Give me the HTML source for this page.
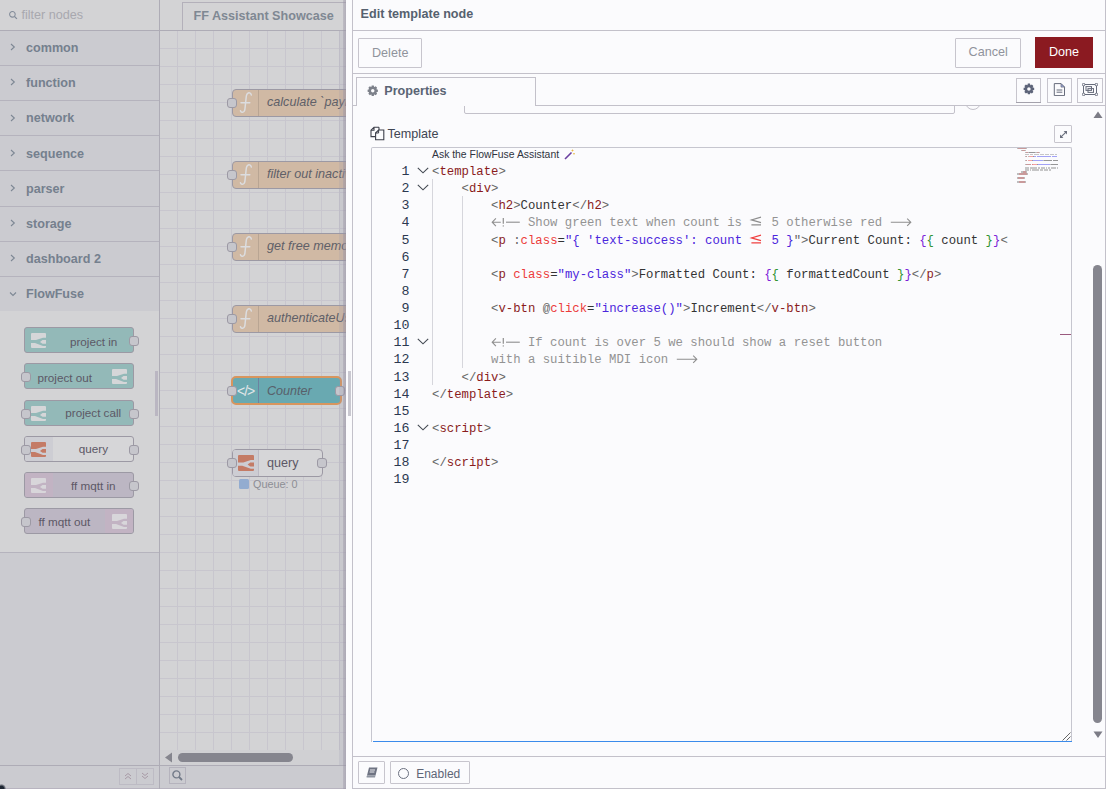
<!DOCTYPE html>
<html><head><meta charset="utf-8">
<style>
*{box-sizing:border-box;margin:0;padding:0}
html,body{width:1106px;height:789px;overflow:hidden;background:#fbfbfd;font-family:"Liberation Sans",sans-serif}
body{position:relative}
.a{position:absolute}
.t{position:absolute;white-space:pre;line-height:1}
/* palette */
#pal{left:0;top:0;width:160px;height:789px;background:#cbcbd0}
.hl{position:absolute;height:1px;background:#b5b3bd}
.vl{position:absolute;width:1px;background:#b5b3bd}
.cat{position:absolute;left:26px;font-weight:bold;font-size:12.6px;color:#75808e;white-space:pre;line-height:1}
.chev{position:absolute;left:10px;width:5px;height:8px}
.pn{position:absolute;left:24px;width:110px;height:26px;border:1px solid #9c99a4;border-radius:3px}
.port{position:absolute;width:10px;height:10px;background:#c6c6cc;border:1px solid #9c99a4;border-radius:3px}
.pl{position:absolute;font-size:11.7px;color:#5c5866;white-space:pre;line-height:1}
/* workspace */
#ws{left:160px;top:0;width:186px;height:789px;background:#d3d3d5;overflow:hidden}
.node{position:absolute;border:1px solid #9c99a4;border-radius:4px;overflow:visible}
.nl{position:absolute;font-size:12.6px;font-style:italic;color:#5f6068;white-space:pre;line-height:1}
/* dialog */
#dlg{left:346px;top:0;width:760px;height:789px;background:#fbfbfd}
.btn{position:absolute;border:1px solid #c7c5cd;background:#fbfbfd;border-radius:1px}
.code{position:absolute;left:432px;font-family:"Liberation Mono",monospace;font-size:12.3px;white-space:pre;line-height:17.13px;color:#333333}
.ln{position:absolute;margin-top:-1px;left:380px;width:29.5px;text-align:right;font-family:"Liberation Mono",monospace;font-size:13.3px;line-height:17.13px;color:#2b3850}
.tg{color:#8a1c1c}.br{color:#666666}.at{color:#ec3b3b}.va{color:#4b26dc}.cm{color:#939393}.g1{color:#319331}.g2{color:#7b22d8}
</style></head><body>
<div id="pal" class="a">
<div class="a" style="left:0;top:0;width:159px;height:30px;background:#d3d3d5"></div>
<div class="hl" style="left:0;top:30px;width:159px;background:#aeacb6"></div>
<svg class="a" style="left:8px;top:10px" width="10" height="10" viewBox="0 0 10 10"><circle cx="4.4" cy="4.3" r="2.8" fill="none" stroke="#838c9a" stroke-width="1.05"/><path d="M6.4 6.4 L8.9 8.9" stroke="#838c9a" stroke-width="1.3"/></svg>
<div class="t" style="left:21.5px;top:8.60px;font-size:12.6px;color:#a8a8af">filter nodes</div>
<div class="cat" style="top:42.13px">common</div>
<svg class="a" style="left:10px;top:43.2px" width="6" height="8" viewBox="0 0 6 8"><path d="M1 1 L4.3 4 L1 7" fill="none" stroke="#7d8794" stroke-width="1.1"/></svg>
<div class="cat" style="top:77.27px">function</div>
<svg class="a" style="left:10px;top:78.3px" width="6" height="8" viewBox="0 0 6 8"><path d="M1 1 L4.3 4 L1 7" fill="none" stroke="#7d8794" stroke-width="1.1"/></svg>
<div class="cat" style="top:112.41px">network</div>
<svg class="a" style="left:10px;top:113.5px" width="6" height="8" viewBox="0 0 6 8"><path d="M1 1 L4.3 4 L1 7" fill="none" stroke="#7d8794" stroke-width="1.1"/></svg>
<div class="cat" style="top:147.55px">sequence</div>
<svg class="a" style="left:10px;top:148.6px" width="6" height="8" viewBox="0 0 6 8"><path d="M1 1 L4.3 4 L1 7" fill="none" stroke="#7d8794" stroke-width="1.1"/></svg>
<div class="cat" style="top:182.69px">parser</div>
<svg class="a" style="left:10px;top:183.8px" width="6" height="8" viewBox="0 0 6 8"><path d="M1 1 L4.3 4 L1 7" fill="none" stroke="#7d8794" stroke-width="1.1"/></svg>
<div class="cat" style="top:217.83px">storage</div>
<svg class="a" style="left:10px;top:218.9px" width="6" height="8" viewBox="0 0 6 8"><path d="M1 1 L4.3 4 L1 7" fill="none" stroke="#7d8794" stroke-width="1.1"/></svg>
<div class="cat" style="top:252.97px">dashboard 2</div>
<svg class="a" style="left:10px;top:254.0px" width="6" height="8" viewBox="0 0 6 8"><path d="M1 1 L4.3 4 L1 7" fill="none" stroke="#7d8794" stroke-width="1.1"/></svg>
<div class="cat" style="top:288.11px">FlowFuse</div>
<svg class="a" style="left:9px;top:291.0px" width="8" height="6" viewBox="0 0 8 6"><path d="M1 1.5 L4 4.5 L7 1.5" fill="none" stroke="#7d8794" stroke-width="1.1"/></svg>
<div class="hl" style="left:0;top:65px;width:159px"></div>
<div class="hl" style="left:0;top:100px;width:159px"></div>
<div class="hl" style="left:0;top:135px;width:159px"></div>
<div class="hl" style="left:0;top:170px;width:159px"></div>
<div class="hl" style="left:0;top:206px;width:159px"></div>
<div class="hl" style="left:0;top:241px;width:159px"></div>
<div class="hl" style="left:0;top:276px;width:159px"></div>
<div class="a" style="left:0;top:311px;width:159px;height:241px;background:#d3d3d5"></div>
<div class="hl" style="left:0;top:552px;width:159px"></div>
<div class="pn" style="top:327px;background:#93b9b8"></div>
<svg class="a" style="left:31px;top:333px" width="15" height="15" viewBox="0 0 15 15" fill="#d5d6d8"><path d="M0 1Q0 0 1 0H14Q15 0 15 1V4.8H12L5 7H0Z"/><path d="M9 8.9L11.5 7.1H15V10.7H11.5Z"/><path d="M0 10.1H4L12 13H15V14Q15 15 14 15H1Q0 15 0 14Z"/></svg>
<div class="pl" style="left:69.9px;top:335.7px">project in</div>
<div class="port" style="left:129px;top:336px"></div>
<div class="pn" style="top:363px;background:#93b9b8"></div>
<svg class="a" style="left:112px;top:369px" width="15" height="15" viewBox="0 0 15 15" fill="#d5d6d8"><path d="M0 1Q0 0 1 0H14Q15 0 15 1V4.8H12L5 7H0Z"/><path d="M9 8.9L11.5 7.1H15V10.7H11.5Z"/><path d="M0 10.1H4L12 13H15V14Q15 15 14 15H1Q0 15 0 14Z"/></svg>
<div class="pl" style="left:37.4px;top:371.6px">project out</div>
<div class="port" style="left:21px;top:372px"></div>
<div class="pn" style="top:400px;background:#93b9b8"></div>
<svg class="a" style="left:31px;top:406px" width="15" height="15" viewBox="0 0 15 15" fill="#d5d6d8"><path d="M0 1Q0 0 1 0H14Q15 0 15 1V4.8H12L5 7H0Z"/><path d="M9 8.9L11.5 7.1H15V10.7H11.5Z"/><path d="M0 10.1H4L12 13H15V14Q15 15 14 15H1Q0 15 0 14Z"/></svg>
<div class="pl" style="left:65.3px;top:407.3px">project call</div>
<div class="port" style="left:21px;top:409px"></div>
<div class="port" style="left:129px;top:409px"></div>
<div class="pn" style="top:436px;background:#d6d6d8"></div>
<div class="a" style="left:25px;top:437px;width:28px;height:24px;background:#cdcdd3;border-radius:2px 0 0 2px"></div>
<svg class="a" style="left:31px;top:442px" width="15" height="15" viewBox="0 0 15 15" fill="#c47b66"><path d="M0 1Q0 0 1 0H14Q15 0 15 1V4.8H12L5 7H0Z"/><path d="M9 8.9L11.5 7.1H15V10.7H11.5Z"/><path d="M0 10.1H4L12 13H15V14Q15 15 14 15H1Q0 15 0 14Z"/></svg>
<div class="pl" style="left:78.8px;top:443.3px">query</div>
<div class="port" style="left:21px;top:445px"></div>
<div class="port" style="left:129px;top:445px"></div>
<div class="pn" style="top:472px;background:#bcb6c3"></div>
<div class="a" style="left:25px;top:473px;width:28px;height:24px;background:#c2b3c3;border-radius:2px 0 0 2px"></div>
<svg class="a" style="left:31px;top:478px" width="15" height="15" viewBox="0 0 15 15" fill="#d8d6da"><path d="M0 1Q0 0 1 0H14Q15 0 15 1V4.8H12L5 7H0Z"/><path d="M9 8.9L11.5 7.1H15V10.7H11.5Z"/><path d="M0 10.1H4L12 13H15V14Q15 15 14 15H1Q0 15 0 14Z"/></svg>
<div class="pl" style="left:70.9px;top:480.3px">ff mqtt in</div>
<div class="port" style="left:129px;top:481px"></div>
<div class="pn" style="top:508px;background:#bcb6c3"></div>
<div class="a" style="left:105px;top:509px;width:28px;height:24px;background:#c2b3c3;border-radius:0 2px 2px 0"></div>
<svg class="a" style="left:112px;top:514px" width="15" height="15" viewBox="0 0 15 15" fill="#d8d6da"><path d="M0 1Q0 0 1 0H14Q15 0 15 1V4.8H12L5 7H0Z"/><path d="M9 8.9L11.5 7.1H15V10.7H11.5Z"/><path d="M0 10.1H4L12 13H15V14Q15 15 14 15H1Q0 15 0 14Z"/></svg>
<div class="pl" style="left:38.4px;top:516.1px">ff mqtt out</div>
<div class="port" style="left:21px;top:517px"></div>
<div class="hl" style="left:0;top:765px;width:159px;background:#aeacb6"></div>
<div class="a" style="left:119px;top:768px;width:18px;height:17px;border:1px solid #bdbbc4"></div>
<div class="a" style="left:136px;top:768px;width:18px;height:17px;border:1px solid #bdbbc4"></div>
<svg class="a" style="left:123px;top:771px" width="10" height="10" viewBox="0 0 10 10"><path d="M2 5L5 2.5L8 5M2 8L5 5.5L8 8" fill="none" stroke="#a89aa6" stroke-width="1"/></svg>
<svg class="a" style="left:140px;top:771px" width="10" height="10" viewBox="0 0 10 10"><path d="M2 2L5 4.5L8 2M2 5L5 7.5L8 5" fill="none" stroke="#a89aa6" stroke-width="1"/></svg>
<div class="hl" style="left:0;top:788px;width:160px;background:#b8b4c0"></div>
<div class="a" style="left:155px;top:371px;width:3px;height:45px;background:#bab6c2"></div>
</div>
<div class="vl" style="left:159px;top:0;height:789px;background:#aeacb6"></div><div id="ws" class="a">
<div class="a" style="left:0;top:31px;width:186px;height:719px;background-color:#d3d3d5;background-image:linear-gradient(to right,#c8c6ce 1px,transparent 1px),linear-gradient(to bottom,#c8c6ce 1px,transparent 1px);background-size:18px 18px;background-position:-1px -1px"></div>
<div class="a" style="left:0;top:0;width:186px;height:30px;background:#d3d3d5"></div>
<div class="a" style="left:22px;top:2px;width:200px;height:29px;border:1px solid #b3b0ba;border-bottom:none;background:#d3d3d5"></div>
<div class="t" style="left:33.5px;top:9.93px;font-size:12.6px;font-weight:bold;color:#7f8893">FF Assistant Showcase</div>
<div class="hl" style="left:0;top:30px;width:186px;background:#aeacb6"></div>
<div class="node" style="left:72px;top:89px;width:160px;height:28px;background:#d0b9a4"></div>
<div class="a" style="left:98px;top:90px;width:1px;height:26px;background:#b9a593"></div>
<svg class="a" style="left:78px;top:90px" width="16" height="26" viewBox="0 0 16 26"><path d="M13.3 5C13 3 11.5 2.5 10.2 3C8.8 3.5 8.3 5.5 8.1 8L7 18.5C6.8 21 5.8 22.5 4 22.2C3 22 2.6 21.4 2.5 20.8M3 12.8H11.8" fill="none" stroke="#dcdde0" stroke-width="1.5" stroke-linecap="round"/></svg>
<div class="nl" style="left:107px;top:96.33px">calculate `payload`</div>
<div class="port" style="left:67px;top:98px"></div>
<div class="node" style="left:72px;top:161px;width:160px;height:28px;background:#d0b9a4"></div>
<div class="a" style="left:98px;top:162px;width:1px;height:26px;background:#b9a593"></div>
<svg class="a" style="left:78px;top:162px" width="16" height="26" viewBox="0 0 16 26"><path d="M13.3 5C13 3 11.5 2.5 10.2 3C8.8 3.5 8.3 5.5 8.1 8L7 18.5C6.8 21 5.8 22.5 4 22.2C3 22 2.6 21.4 2.5 20.8M3 12.8H11.8" fill="none" stroke="#dcdde0" stroke-width="1.5" stroke-linecap="round"/></svg>
<div class="nl" style="left:107px;top:168.33px">filter out inactive</div>
<div class="port" style="left:67px;top:170px"></div>
<div class="node" style="left:72px;top:233px;width:160px;height:28px;background:#d0b9a4"></div>
<div class="a" style="left:98px;top:234px;width:1px;height:26px;background:#b9a593"></div>
<svg class="a" style="left:78px;top:234px" width="16" height="26" viewBox="0 0 16 26"><path d="M13.3 5C13 3 11.5 2.5 10.2 3C8.8 3.5 8.3 5.5 8.1 8L7 18.5C6.8 21 5.8 22.5 4 22.2C3 22 2.6 21.4 2.5 20.8M3 12.8H11.8" fill="none" stroke="#dcdde0" stroke-width="1.5" stroke-linecap="round"/></svg>
<div class="nl" style="left:107px;top:240.33px">get free memory</div>
<div class="port" style="left:67px;top:242px"></div>
<div class="node" style="left:72px;top:305px;width:160px;height:28px;background:#d0b9a4"></div>
<div class="a" style="left:98px;top:306px;width:1px;height:26px;background:#b9a593"></div>
<svg class="a" style="left:78px;top:306px" width="16" height="26" viewBox="0 0 16 26"><path d="M13.3 5C13 3 11.5 2.5 10.2 3C8.8 3.5 8.3 5.5 8.1 8L7 18.5C6.8 21 5.8 22.5 4 22.2C3 22 2.6 21.4 2.5 20.8M3 12.8H11.8" fill="none" stroke="#dcdde0" stroke-width="1.5" stroke-linecap="round"/></svg>
<div class="nl" style="left:107px;top:312.33px">authenticateUser</div>
<div class="port" style="left:67px;top:314px"></div>
<div class="a" style="left:71px;top:376px;width:111px;height:29px;border:2px solid #d8955e;border-radius:5px;background:#69a9b1"></div>
<div class="a" style="left:73px;top:378px;width:26px;height:25px;border:1px solid #6c82a0;border-left:none;border-top:none;border-bottom:none"></div>
<div class="t" style="left:77px;top:384px;font-size:14px;color:#e2e6e8;letter-spacing:-1px">&lt;/&gt;</div>
<div class="nl" style="left:107px;top:385.13px;color:#58606a">Counter</div>
<div class="port" style="left:67px;top:386px"></div>
<div class="port" style="left:175px;top:386px"></div>
<div class="node" style="left:72px;top:449px;width:91px;height:28px;background:#d6d6d8"></div>
<div class="a" style="left:73px;top:450px;width:26px;height:26px;background:#cdcdd3;border-right:1px solid #bcbac4;border-radius:2px 0 0 2px"></div>
<svg class="a" style="left:77.5px;top:455px" width="16" height="16" viewBox="0 0 15 15" fill="#c47b66"><path d="M0 1Q0 0 1 0H14Q15 0 15 1V4.8H12L5 7H0Z"/><path d="M9 8.9L11.5 7.1H15V10.7H11.5Z"/><path d="M0 10.1H4L12 13H15V14Q15 15 14 15H1Q0 15 0 14Z"/></svg>
<div class="t" style="left:107px;top:457.43px;font-size:12.6px;color:#5c5866">query</div>
<div class="port" style="left:67px;top:458px"></div>
<div class="port" style="left:157px;top:458px"></div>
<div class="a" style="left:79px;top:479px;width:10px;height:10px;background:#93acd0;border-radius:1.5px"></div>
<div class="t" style="left:93px;top:478.90px;font-size:10.8px;color:#8d8d94">Queue: 0</div>
<div class="a" style="left:0;top:750px;width:186px;height:15px;background:#d0d0d3"></div>
<svg class="a" style="left:4px;top:752px" width="9" height="11" viewBox="0 0 9 11"><path d="M8 0.5V10.5L1 5.5Z" fill="#85858e"/></svg>
<div class="a" style="left:18px;top:753px;width:115px;height:9px;border-radius:4.5px;background:#85858e"></div>
<div class="a" style="left:0;top:765px;width:186px;height:24px;background:#cbcbd0"></div>
<div class="hl" style="left:0;top:765px;width:186px;background:#aeacb6"></div>
<div class="a" style="left:9px;top:767px;width:17px;height:17px;border:1px solid #b5b3bd"></div>
<svg class="a" style="left:11px;top:769px" width="13" height="13" viewBox="0 0 13 13"><circle cx="5.4" cy="5.4" r="3.5" fill="none" stroke="#727a88" stroke-width="1.4"/><path d="M8 8L11 11" stroke="#727a88" stroke-width="1.8"/></svg>
<div class="hl" style="left:0;top:788px;width:186px;background:#b8b4c0"></div>
<div class="a" style="left:179px;top:31px;width:7px;height:734px;background:rgba(150,150,170,0.18)"></div>
<div class="a" style="left:183px;top:0;width:3px;height:789px;background:linear-gradient(to right,rgba(150,144,162,0.35),rgba(150,144,162,0.55))"></div>
</div><div id="dlg" class="a"></div>
<div class="a" style="left:348px;top:371px;width:3px;height:45px;background:#c9c8d0"></div>
<div class="vl" style="left:352px;top:0;height:789px;background:#c3c1ca"></div>
<div class="vl" style="left:1105px;top:0;height:789px;background:#c3c1ca"></div>
<div class="t" style="left:360.6px;top:8.03px;font-size:12.6px;color:#56616f;font-weight:bold">Edit template node</div>
<div class="hl" style="left:352px;top:30px;width:754px;background:#c3c1ca"></div>
<div class="btn" style="left:358px;top:38px;width:64px;height:30px"></div>
<div class="t" style="left:372px;top:46.63px;font-size:12.6px;color:#90939c;">Delete</div>
<div class="btn" style="left:955px;top:38px;width:66px;height:30px"></div>
<div class="t" style="left:968.6px;top:46.33px;font-size:12.6px;color:#90939c;">Cancel</div>
<div class="a" style="left:1035px;top:37px;width:58px;height:31px;background:#8b1a21"></div>
<div class="t" style="left:1049px;top:46.33px;font-size:12.6px;color:#ffffff;">Done</div>
<div class="hl" style="left:352px;top:73px;width:754px;background:#c3c1ca"></div>
<div class="a" style="left:356px;top:77px;width:180px;height:29px;border:1px solid #c3c1ca;border-bottom:none;background:#fbfbfd"></div>
<div class="hl" style="left:352px;top:105px;width:4px;background:#c3c1ca"></div>
<div class="hl" style="left:535px;top:105px;width:571px;background:#c3c1ca"></div>
<svg class="a" style="left:367px;top:84.8px" width="11.5" height="11.5" viewBox="0 0 14 14"><path fill="#7d818a" fill-rule="evenodd" d="M5.27 2.41 L5.73 0.73 L8.27 0.73 L8.73 2.41 L9.02 2.54 L10.54 1.67 L12.33 3.46 L11.46 4.98 L11.59 5.27 L13.27 5.73 L13.27 8.27 L11.59 8.73 L11.46 9.02 L12.33 10.54 L10.54 12.33 L9.02 11.46 L8.73 11.59 L8.27 13.27 L5.73 13.27 L5.27 11.59 L4.98 11.46 L3.46 12.33 L1.67 10.54 L2.54 9.02 L2.41 8.73 L0.73 8.27 L0.73 5.73 L2.41 5.27 L2.54 4.98 L1.67 3.46 L3.46 1.67 L4.98 2.54Z M9.1 7 A2.1 2.1 0 1 0 4.9 7 A2.1 2.1 0 1 0 9.1 7Z"/></svg>
<div class="t" style="left:384.3px;top:84.53px;font-size:12.6px;color:#5a6474;font-weight:bold">Properties</div>
<div class="a" style="left:1016px;top:78px;width:25px;height:25px;border:1px solid #c7c5cd"></div>
<div class="a" style="left:1047px;top:78px;width:25px;height:25px;border:1px solid #c7c5cd"></div>
<div class="a" style="left:1077px;top:78px;width:26px;height:25px;border:1px solid #c7c5cd"></div>
<div class="hl" style="left:1016px;top:102px;width:25px;background:#a4a2ac"></div>
<svg class="a" style="left:1023px;top:83.3px" width="11.8" height="11.8" viewBox="0 0 14 14"><path fill="#5d6479" fill-rule="evenodd" d="M5.27 2.41 L5.73 0.73 L8.27 0.73 L8.73 2.41 L9.02 2.54 L10.54 1.67 L12.33 3.46 L11.46 4.98 L11.59 5.27 L13.27 5.73 L13.27 8.27 L11.59 8.73 L11.46 9.02 L12.33 10.54 L10.54 12.33 L9.02 11.46 L8.73 11.59 L8.27 13.27 L5.73 13.27 L5.27 11.59 L4.98 11.46 L3.46 12.33 L1.67 10.54 L2.54 9.02 L2.41 8.73 L0.73 8.27 L0.73 5.73 L2.41 5.27 L2.54 4.98 L1.67 3.46 L3.46 1.67 L4.98 2.54Z M9.1 7 A2.1 2.1 0 1 0 4.9 7 A2.1 2.1 0 1 0 9.1 7Z"/></svg>
<svg class="a" style="left:1053px;top:83px" width="13" height="13" viewBox="0 0 13 13"><path d="M1.3 0.6H8L11.5 4.1V12.6H1.3Z" fill="#fbfbfd" stroke="#676c7b" stroke-width="1"/><path d="M8 0.6V4.1H11.5Z" fill="#9aa6d8" stroke="#676c7b" stroke-width="0.7"/><path d="M3.6 7H9.3M3.6 9.2H9.3" stroke="#676c7b" stroke-width="1"/></svg>
<svg class="a" style="left:1082px;top:83px" width="16" height="13" viewBox="0 0 16 13"><rect x="1.5" y="1.5" width="13" height="10" fill="none" stroke="#676c7b" stroke-width="1"/><rect x="4" y="3.6" width="5.5" height="3.8" fill="#fbfbfd" stroke="#676c7b" stroke-width="1"/><rect x="6" y="5.6" width="5.5" height="3.8" fill="none" stroke="#676c7b" stroke-width="1"/><circle cx="1.6" cy="1.6" r="1.3" fill="#fbfbfd" stroke="#676c7b" stroke-width="1"/><circle cx="14.4" cy="1.6" r="1.3" fill="#fbfbfd" stroke="#676c7b" stroke-width="1"/><circle cx="1.6" cy="11.4" r="1.3" fill="#fbfbfd" stroke="#676c7b" stroke-width="1"/><circle cx="14.4" cy="11.4" r="1.3" fill="#fbfbfd" stroke="#676c7b" stroke-width="1"/></svg>
<div class="a" style="left:353px;top:106px;width:752px;height:650px;overflow:hidden">
<div class="a" style="left:111px;top:-30px;width:491px;height:38px;border:1px solid #c3c1ca;border-radius:2px"></div>
<div class="a" style="left:612px;top:-12px;width:16px;height:16px;border:1px solid #c3c1ca;border-radius:50%"></div>
</div>
<svg class="a" style="left:370px;top:126px" width="15" height="15" viewBox="0 0 15 15"><path d="M9 1.2H4L1 4.2V10.6H5.6M1 4.2H4V1.2M9 1.2V4" fill="none" stroke="#3c3f4a" stroke-width="1.1"/><path d="M5.6 7L8.6 4H13.8V13.7H5.6Z" fill="#fbfbfd" stroke="#3c3f4a" stroke-width="1.1"/><path d="M5.6 7H8.6V4" fill="none" stroke="#3c3f4a" stroke-width="1"/></svg>
<div class="t" style="left:387.4px;top:128.03px;font-size:12.6px;color:#3f4552;">Template</div>
<div class="a" style="left:1054px;top:125px;width:18px;height:18px;border:1px solid #c7c5cd;border-radius:1px"></div>
<svg class="a" style="left:1057.5px;top:128.5px" width="11" height="11" viewBox="0 0 11 11"><path d="M2.8 8.2L8.2 2.8" stroke="#6a6f7e" stroke-width="1.1"/><path d="M5.6 2H9V5.4Z M2 5.6V9H5.4Z" fill="#6a6f7e"/></svg>
<div class="a" style="left:371px;top:147px;width:701px;height:595px;border:1px solid #c6c6cf;border-bottom:none;border-radius:2px 2px 0 0;background:#fbfbfd"></div>
<div class="hl" style="left:373px;top:741px;width:699px;background:#3b8beb"></div>
<svg class="a" style="left:1061px;top:731px" width="10" height="10" viewBox="0 0 10 10"><path d="M1.5 9.5L9.5 1.5M5.5 9.5L9.5 5.5" stroke="#555" stroke-width="0.9"/></svg>
<svg class="a" style="left:1093px;top:111px" width="10" height="8" viewBox="0 0 10 8"><path d="M5 0.5L9.5 7H0.5Z" fill="#7c7c86"/></svg>
<div class="a" style="left:1093px;top:265px;width:9px;height:458px;border-radius:4.5px;background:#85858e"></div>
<svg class="a" style="left:1093px;top:731px" width="10" height="8" viewBox="0 0 10 8"><path d="M0.5 0.5H9.5L5 7Z" fill="#7c7c86"/></svg>
<div class="hl" style="left:352px;top:756px;width:754px;background:#c3c1ca"></div>
<div class="btn" style="left:358px;top:761px;width:27px;height:23px"></div>
<svg class="a" style="left:366px;top:767px" width="12" height="11" viewBox="0 0 12 11"><path d="M3 0.5H11.5L9.5 8.5H1Z" fill="#6e7382"/><path d="M1 8.5H9.5L9 10.6H1.3Q0.3 10.6 0.5 9.4Z" fill="#8e94a0"/><path d="M4 3H9M3.6 5H8.4" stroke="#fbfbfd" stroke-width="0.9"/></svg>
<div class="btn" style="left:390px;top:761px;width:80px;height:23px"></div>
<div class="a" style="left:398px;top:768px;width:11px;height:11px;border:1.3px solid #6b7080;border-radius:50%"></div>
<div class="t" style="left:416.2px;top:768.34px;font-size:12px;color:#5e6676;">Enabled</div>
<div class="hl" style="left:352px;top:788px;width:754px;background:#c3c1ca"></div>
<div class="a" style="left:-3px;top:784px;width:9px;height:9px;border-radius:50%;background:radial-gradient(circle,#1e2633 35%,rgba(30,38,51,0) 75%)"></div><div class="vl" style="left:432px;top:179.13px;height:205.56px;background:#d6d6dc"></div>
<div class="vl" style="left:462px;top:196.26px;height:171.30px;background:#d6d6dc"></div>
<div class="t" style="left:432px;top:149.6px;font-size:10.4px;color:#2f3340">Ask the FlowFuse Assistant</div>
<svg class="a" style="left:564px;top:149px" width="11" height="11" viewBox="0 0 11 11"><path d="M1 10L7.5 3.5" stroke="#6b3fa0" stroke-width="1.6"/><path d="M8.5 0.5V2.5M7.5 1.5H9.5M10 4V5.5M9.3 4.7H10.7" stroke="#e8b53a" stroke-width="0.8"/></svg>
<div class="a" style="left:380px;top:160px;width:630px;height:340px;overflow:hidden">
<div class="ln" style="left:0;top:4.06px">1</div>
<div class="code" style="left:52px;top:4.06px"><span class="br">&lt;</span><span class="tg">template</span><span class="br">&gt;</span></div>
<svg class="a" style="left:37px;top:7.02px" width="12" height="7" viewBox="0 0 12 7"><path d="M0.8 0.8L6 5.8L11.2 0.8" fill="none" stroke="#424852" stroke-width="1.1"/></svg>
<div class="ln" style="left:0;top:21.19px">2</div>
<div class="code" style="left:52px;top:21.19px">    <span class="br">&lt;</span><span class="tg">div</span><span class="br">&gt;</span></div>
<svg class="a" style="left:37px;top:24.15px" width="12" height="7" viewBox="0 0 12 7"><path d="M0.8 0.8L6 5.8L11.2 0.8" fill="none" stroke="#424852" stroke-width="1.1"/></svg>
<div class="ln" style="left:0;top:38.32px">3</div>
<div class="code" style="left:52px;top:38.32px">        <span class="br">&lt;</span><span class="tg">h2</span><span class="br">&gt;</span>Counter<span class="br">&lt;/</span><span class="tg">h2</span><span class="br">&gt;</span></div>
<div class="ln" style="left:0;top:55.45px">4</div>
<div class="code" style="left:52px;top:55.45px">        <span style="display:inline-block;width:29.56px;height:17.13px;vertical-align:top"><svg width="29.56" height="17.13" viewBox="0 0 29.56 17.13"><path d="M1.2 7.2H9.8M4.9 3.3L1.2 7.2L4.9 11.1" fill="none" stroke="#8e8e8e" stroke-width="1.1"/><path d="M12.3 2.9V8.7" stroke="#8e8e8e" stroke-width="1.2"/><circle cx="12.3" cy="10.9" r="0.7" fill="#8e8e8e"/><path d="M15 7.2H28.8" stroke="#8e8e8e" stroke-width="1.1"/></svg></span><span class="cm"> Show green text when count is </span><span style="display:inline-block;width:14.78px;height:17.13px;vertical-align:top"><svg width="14.78" height="17.13" viewBox="0 0 14.78 17.13"><path d="M12 2.1L2.4 4.9L12 7.6M2.4 9.9H12" fill="none" stroke="#8e8e8e" stroke-width="1.1"/></svg></span><span class="cm"> 5 otherwise red </span><span style="display:inline-block;width:22.17px;height:17.13px;vertical-align:top"><svg width="22.17" height="17.13" viewBox="0 0 22.17 17.13"><path d="M0.8 7.2H20.8M17.2 3.6L20.8 7.2L17.2 10.8" fill="none" stroke="#8e8e8e" stroke-width="1.1"/></svg></span></div>
<div class="ln" style="left:0;top:72.58px">5</div>
<div class="code" style="left:52px;top:72.58px">        <span class="br">&lt;</span><span class="tg">p</span> <span class="br">:</span><span class="at">class</span>=<span class="va">"{ 'text-success': count </span><span style="display:inline-block;width:14.78px;height:17.13px;vertical-align:top"><svg width="14.78" height="17.13" viewBox="0 0 14.78 17.13"><path d="M12 2.1L2.4 4.9L12 7.6M2.4 9.9H12" fill="none" stroke="#f04040" stroke-width="1.1"/></svg></span><span class="va"> 5 }</span><span class="br">"</span><span class="br">&gt;</span>Current Count: <span class="g2">{</span><span class="g1">{</span> count <span class="g1">}</span><span class="g2">}</span><span class="br">&lt;</span></div>
<div class="ln" style="left:0;top:89.71px">6</div>
<div class="ln" style="left:0;top:106.84px">7</div>
<div class="code" style="left:52px;top:106.84px">        <span class="br">&lt;</span><span class="tg">p</span> <span class="at">class</span>=<span class="va">"my-class"</span><span class="br">&gt;</span>Formatted Count: <span class="g2">{</span><span class="g1">{</span> formattedCount <span class="g1">}</span><span class="g2">}</span><span class="br">&lt;/</span><span class="tg">p</span><span class="br">&gt;</span></div>
<div class="ln" style="left:0;top:123.97px">8</div>
<div class="ln" style="left:0;top:141.10px">9</div>
<div class="code" style="left:52px;top:141.10px">        <span class="br">&lt;</span><span class="tg">v-btn</span> <span class="br">@</span><span class="at">click</span>=<span class="va">"increase()"</span><span class="br">&gt;</span>Increment<span class="br">&lt;/</span><span class="tg">v-btn</span><span class="br">&gt;</span></div>
<div class="ln" style="left:0;top:158.23px">10</div>
<div class="ln" style="left:0;top:175.36px">11</div>
<div class="code" style="left:52px;top:175.36px">        <span style="display:inline-block;width:29.56px;height:17.13px;vertical-align:top"><svg width="29.56" height="17.13" viewBox="0 0 29.56 17.13"><path d="M1.2 7.2H9.8M4.9 3.3L1.2 7.2L4.9 11.1" fill="none" stroke="#8e8e8e" stroke-width="1.1"/><path d="M12.3 2.9V8.7" stroke="#8e8e8e" stroke-width="1.2"/><circle cx="12.3" cy="10.9" r="0.7" fill="#8e8e8e"/><path d="M15 7.2H28.8" stroke="#8e8e8e" stroke-width="1.1"/></svg></span><span class="cm"> If count is over 5 we should show a reset button</span></div>
<svg class="a" style="left:37px;top:178.32px" width="12" height="7" viewBox="0 0 12 7"><path d="M0.8 0.8L6 5.8L11.2 0.8" fill="none" stroke="#424852" stroke-width="1.1"/></svg>
<div class="ln" style="left:0;top:192.49px">12</div>
<div class="code" style="left:52px;top:192.49px">        <span class="cm">with a suitible MDI icon </span><span style="display:inline-block;width:22.17px;height:17.13px;vertical-align:top"><svg width="22.17" height="17.13" viewBox="0 0 22.17 17.13"><path d="M0.8 7.2H20.8M17.2 3.6L20.8 7.2L17.2 10.8" fill="none" stroke="#8e8e8e" stroke-width="1.1"/></svg></span></div>
<div class="ln" style="left:0;top:209.62px">13</div>
<div class="code" style="left:52px;top:209.62px">    <span class="br">&lt;/</span><span class="tg">div</span><span class="br">&gt;</span></div>
<div class="ln" style="left:0;top:226.75px">14</div>
<div class="code" style="left:52px;top:226.75px"><span class="br">&lt;/</span><span class="tg">template</span><span class="br">&gt;</span></div>
<div class="ln" style="left:0;top:243.88px">15</div>
<div class="ln" style="left:0;top:261.01px">16</div>
<div class="code" style="left:52px;top:261.01px"><span class="br">&lt;</span><span class="tg">script</span><span class="br">&gt;</span></div>
<svg class="a" style="left:37px;top:263.98px" width="12" height="7" viewBox="0 0 12 7"><path d="M0.8 0.8L6 5.8L11.2 0.8" fill="none" stroke="#424852" stroke-width="1.1"/></svg>
<div class="ln" style="left:0;top:278.14px">17</div>
<div class="ln" style="left:0;top:295.27px">18</div>
<div class="code" style="left:52px;top:295.27px"><span class="br">&lt;/</span><span class="tg">script</span><span class="br">&gt;</span></div>
<div class="ln" style="left:0;top:312.40px">19</div>
</div>
<div class="a" style="left:1017.3px;top:147.8px;width:40.7px;height:38px;overflow:hidden">
<div class="a" style="left:0.00px;top:0.00px;width:0.95px;height:1.5px;background:#8a8a8a;opacity:0.55"></div>
<div class="a" style="left:0.95px;top:0.00px;width:7.60px;height:1.5px;background:#a04a4a;opacity:0.55"></div>
<div class="a" style="left:8.55px;top:0.00px;width:0.95px;height:1.5px;background:#8a8a8a;opacity:0.55"></div>
<div class="a" style="left:3.80px;top:1.97px;width:0.95px;height:1.5px;background:#8a8a8a;opacity:0.55"></div>
<div class="a" style="left:4.75px;top:1.97px;width:2.85px;height:1.5px;background:#a04a4a;opacity:0.55"></div>
<div class="a" style="left:7.60px;top:1.97px;width:0.95px;height:1.5px;background:#8a8a8a;opacity:0.55"></div>
<div class="a" style="left:7.60px;top:3.94px;width:0.95px;height:1.5px;background:#8a8a8a;opacity:0.55"></div>
<div class="a" style="left:8.55px;top:3.94px;width:1.90px;height:1.5px;background:#a04a4a;opacity:0.55"></div>
<div class="a" style="left:10.45px;top:3.94px;width:0.95px;height:1.5px;background:#8a8a8a;opacity:0.55"></div>
<div class="a" style="left:11.40px;top:3.94px;width:6.65px;height:1.5px;background:#444444;opacity:0.55"></div>
<div class="a" style="left:18.05px;top:3.94px;width:1.90px;height:1.5px;background:#8a8a8a;opacity:0.55"></div>
<div class="a" style="left:19.95px;top:3.94px;width:1.90px;height:1.5px;background:#a04a4a;opacity:0.55"></div>
<div class="a" style="left:21.85px;top:3.94px;width:0.95px;height:1.5px;background:#8a8a8a;opacity:0.55"></div>
<div class="a" style="left:7.60px;top:5.91px;width:3.80px;height:1.5px;background:#9a9a9a;opacity:0.55"></div>
<div class="a" style="left:12.35px;top:5.91px;width:3.80px;height:1.5px;background:#9a9a9a;opacity:0.55"></div>
<div class="a" style="left:17.10px;top:5.91px;width:4.75px;height:1.5px;background:#9a9a9a;opacity:0.55"></div>
<div class="a" style="left:22.80px;top:5.91px;width:3.80px;height:1.5px;background:#9a9a9a;opacity:0.55"></div>
<div class="a" style="left:27.55px;top:5.91px;width:3.80px;height:1.5px;background:#9a9a9a;opacity:0.55"></div>
<div class="a" style="left:32.30px;top:5.91px;width:4.75px;height:1.5px;background:#9a9a9a;opacity:0.55"></div>
<div class="a" style="left:38.00px;top:5.91px;width:1.90px;height:1.5px;background:#9a9a9a;opacity:0.55"></div>
<div class="a" style="left:40.85px;top:5.91px;width:1.90px;height:1.5px;background:#9a9a9a;opacity:0.55"></div>
<div class="a" style="left:43.70px;top:5.91px;width:0.95px;height:1.5px;background:#9a9a9a;opacity:0.55"></div>
<div class="a" style="left:45.60px;top:5.91px;width:8.55px;height:1.5px;background:#9a9a9a;opacity:0.55"></div>
<div class="a" style="left:55.10px;top:5.91px;width:2.85px;height:1.5px;background:#9a9a9a;opacity:0.55"></div>
<div class="a" style="left:58.90px;top:5.91px;width:2.85px;height:1.5px;background:#9a9a9a;opacity:0.55"></div>
<div class="a" style="left:7.60px;top:7.88px;width:0.95px;height:1.5px;background:#8a8a8a;opacity:0.55"></div>
<div class="a" style="left:8.55px;top:7.88px;width:0.95px;height:1.5px;background:#a04a4a;opacity:0.55"></div>
<div class="a" style="left:10.45px;top:7.88px;width:0.95px;height:1.5px;background:#8a8a8a;opacity:0.55"></div>
<div class="a" style="left:11.40px;top:7.88px;width:4.75px;height:1.5px;background:#f05a5a;opacity:0.55"></div>
<div class="a" style="left:16.15px;top:7.88px;width:0.95px;height:1.5px;background:#444444;opacity:0.55"></div>
<div class="a" style="left:17.10px;top:7.88px;width:1.90px;height:1.5px;background:#5a5af0;opacity:0.55"></div>
<div class="a" style="left:19.95px;top:7.88px;width:14.25px;height:1.5px;background:#5a5af0;opacity:0.55"></div>
<div class="a" style="left:35.15px;top:7.88px;width:4.75px;height:1.5px;background:#5a5af0;opacity:0.55"></div>
<div class="a" style="left:40.85px;top:7.88px;width:1.90px;height:1.5px;background:#f05a5a;opacity:0.55"></div>
<div class="a" style="left:43.70px;top:7.88px;width:0.95px;height:1.5px;background:#5a5af0;opacity:0.55"></div>
<div class="a" style="left:45.60px;top:7.88px;width:0.95px;height:1.5px;background:#5a5af0;opacity:0.55"></div>
<div class="a" style="left:46.55px;top:7.88px;width:0.95px;height:1.5px;background:#8a8a8a;opacity:0.55"></div>
<div class="a" style="left:47.50px;top:7.88px;width:0.95px;height:1.5px;background:#8a8a8a;opacity:0.55"></div>
<div class="a" style="left:48.45px;top:7.88px;width:6.65px;height:1.5px;background:#444444;opacity:0.55"></div>
<div class="a" style="left:56.05px;top:7.88px;width:5.70px;height:1.5px;background:#444444;opacity:0.55"></div>
<div class="a" style="left:62.70px;top:7.88px;width:0.95px;height:1.5px;background:#7a4af0;opacity:0.55"></div>
<div class="a" style="left:63.65px;top:7.88px;width:0.95px;height:1.5px;background:#4a9a4a;opacity:0.55"></div>
<div class="a" style="left:65.55px;top:7.88px;width:4.75px;height:1.5px;background:#444444;opacity:0.55"></div>
<div class="a" style="left:71.25px;top:7.88px;width:0.95px;height:1.5px;background:#4a9a4a;opacity:0.55"></div>
<div class="a" style="left:72.20px;top:7.88px;width:0.95px;height:1.5px;background:#7a4af0;opacity:0.55"></div>
<div class="a" style="left:73.15px;top:7.88px;width:0.95px;height:1.5px;background:#8a8a8a;opacity:0.55"></div>
<div class="a" style="left:7.60px;top:11.82px;width:0.95px;height:1.5px;background:#8a8a8a;opacity:0.55"></div>
<div class="a" style="left:8.55px;top:11.82px;width:0.95px;height:1.5px;background:#a04a4a;opacity:0.55"></div>
<div class="a" style="left:10.45px;top:11.82px;width:4.75px;height:1.5px;background:#f05a5a;opacity:0.55"></div>
<div class="a" style="left:15.20px;top:11.82px;width:0.95px;height:1.5px;background:#444444;opacity:0.55"></div>
<div class="a" style="left:16.15px;top:11.82px;width:9.50px;height:1.5px;background:#5a5af0;opacity:0.55"></div>
<div class="a" style="left:25.65px;top:11.82px;width:0.95px;height:1.5px;background:#8a8a8a;opacity:0.55"></div>
<div class="a" style="left:26.60px;top:11.82px;width:8.55px;height:1.5px;background:#444444;opacity:0.55"></div>
<div class="a" style="left:36.10px;top:11.82px;width:5.70px;height:1.5px;background:#444444;opacity:0.55"></div>
<div class="a" style="left:42.75px;top:11.82px;width:0.95px;height:1.5px;background:#7a4af0;opacity:0.55"></div>
<div class="a" style="left:43.70px;top:11.82px;width:0.95px;height:1.5px;background:#4a9a4a;opacity:0.55"></div>
<div class="a" style="left:45.60px;top:11.82px;width:13.30px;height:1.5px;background:#444444;opacity:0.55"></div>
<div class="a" style="left:59.85px;top:11.82px;width:0.95px;height:1.5px;background:#4a9a4a;opacity:0.55"></div>
<div class="a" style="left:60.80px;top:11.82px;width:0.95px;height:1.5px;background:#7a4af0;opacity:0.55"></div>
<div class="a" style="left:61.75px;top:11.82px;width:1.90px;height:1.5px;background:#8a8a8a;opacity:0.55"></div>
<div class="a" style="left:63.65px;top:11.82px;width:0.95px;height:1.5px;background:#a04a4a;opacity:0.55"></div>
<div class="a" style="left:64.60px;top:11.82px;width:0.95px;height:1.5px;background:#8a8a8a;opacity:0.55"></div>
<div class="a" style="left:7.60px;top:15.76px;width:0.95px;height:1.5px;background:#8a8a8a;opacity:0.55"></div>
<div class="a" style="left:8.55px;top:15.76px;width:4.75px;height:1.5px;background:#a04a4a;opacity:0.55"></div>
<div class="a" style="left:14.25px;top:15.76px;width:0.95px;height:1.5px;background:#8a8a8a;opacity:0.55"></div>
<div class="a" style="left:15.20px;top:15.76px;width:4.75px;height:1.5px;background:#f05a5a;opacity:0.55"></div>
<div class="a" style="left:19.95px;top:15.76px;width:0.95px;height:1.5px;background:#444444;opacity:0.55"></div>
<div class="a" style="left:20.90px;top:15.76px;width:11.40px;height:1.5px;background:#5a5af0;opacity:0.55"></div>
<div class="a" style="left:32.30px;top:15.76px;width:0.95px;height:1.5px;background:#8a8a8a;opacity:0.55"></div>
<div class="a" style="left:33.25px;top:15.76px;width:8.55px;height:1.5px;background:#444444;opacity:0.55"></div>
<div class="a" style="left:41.80px;top:15.76px;width:1.90px;height:1.5px;background:#8a8a8a;opacity:0.55"></div>
<div class="a" style="left:43.70px;top:15.76px;width:4.75px;height:1.5px;background:#a04a4a;opacity:0.55"></div>
<div class="a" style="left:48.45px;top:15.76px;width:0.95px;height:1.5px;background:#8a8a8a;opacity:0.55"></div>
<div class="a" style="left:7.60px;top:19.70px;width:3.80px;height:1.5px;background:#9a9a9a;opacity:0.55"></div>
<div class="a" style="left:12.35px;top:19.70px;width:1.90px;height:1.5px;background:#9a9a9a;opacity:0.55"></div>
<div class="a" style="left:15.20px;top:19.70px;width:4.75px;height:1.5px;background:#9a9a9a;opacity:0.55"></div>
<div class="a" style="left:20.90px;top:19.70px;width:1.90px;height:1.5px;background:#9a9a9a;opacity:0.55"></div>
<div class="a" style="left:23.75px;top:19.70px;width:3.80px;height:1.5px;background:#9a9a9a;opacity:0.55"></div>
<div class="a" style="left:28.50px;top:19.70px;width:0.95px;height:1.5px;background:#9a9a9a;opacity:0.55"></div>
<div class="a" style="left:30.40px;top:19.70px;width:1.90px;height:1.5px;background:#9a9a9a;opacity:0.55"></div>
<div class="a" style="left:33.25px;top:19.70px;width:5.70px;height:1.5px;background:#9a9a9a;opacity:0.55"></div>
<div class="a" style="left:39.90px;top:19.70px;width:3.80px;height:1.5px;background:#9a9a9a;opacity:0.55"></div>
<div class="a" style="left:44.65px;top:19.70px;width:0.95px;height:1.5px;background:#9a9a9a;opacity:0.55"></div>
<div class="a" style="left:46.55px;top:19.70px;width:4.75px;height:1.5px;background:#9a9a9a;opacity:0.55"></div>
<div class="a" style="left:52.25px;top:19.70px;width:5.70px;height:1.5px;background:#9a9a9a;opacity:0.55"></div>
<div class="a" style="left:7.60px;top:21.67px;width:3.80px;height:1.5px;background:#9a9a9a;opacity:0.55"></div>
<div class="a" style="left:12.35px;top:21.67px;width:0.95px;height:1.5px;background:#9a9a9a;opacity:0.55"></div>
<div class="a" style="left:14.25px;top:21.67px;width:7.60px;height:1.5px;background:#9a9a9a;opacity:0.55"></div>
<div class="a" style="left:22.80px;top:21.67px;width:2.85px;height:1.5px;background:#9a9a9a;opacity:0.55"></div>
<div class="a" style="left:26.60px;top:21.67px;width:3.80px;height:1.5px;background:#9a9a9a;opacity:0.55"></div>
<div class="a" style="left:31.35px;top:21.67px;width:2.85px;height:1.5px;background:#9a9a9a;opacity:0.55"></div>
<div class="a" style="left:3.80px;top:23.64px;width:1.90px;height:1.5px;background:#8a8a8a;opacity:0.55"></div>
<div class="a" style="left:5.70px;top:23.64px;width:2.85px;height:1.5px;background:#a04a4a;opacity:0.55"></div>
<div class="a" style="left:8.55px;top:23.64px;width:0.95px;height:1.5px;background:#8a8a8a;opacity:0.55"></div>
<div class="a" style="left:0.00px;top:25.61px;width:1.90px;height:1.5px;background:#8a8a8a;opacity:0.55"></div>
<div class="a" style="left:1.90px;top:25.61px;width:7.60px;height:1.5px;background:#a04a4a;opacity:0.55"></div>
<div class="a" style="left:9.50px;top:25.61px;width:0.95px;height:1.5px;background:#8a8a8a;opacity:0.55"></div>
<div class="a" style="left:0.00px;top:29.55px;width:0.95px;height:1.5px;background:#8a8a8a;opacity:0.55"></div>
<div class="a" style="left:0.95px;top:29.55px;width:5.70px;height:1.5px;background:#a04a4a;opacity:0.55"></div>
<div class="a" style="left:6.65px;top:29.55px;width:0.95px;height:1.5px;background:#8a8a8a;opacity:0.55"></div>
<div class="a" style="left:0.00px;top:33.49px;width:1.90px;height:1.5px;background:#8a8a8a;opacity:0.55"></div>
<div class="a" style="left:1.90px;top:33.49px;width:5.70px;height:1.5px;background:#a04a4a;opacity:0.55"></div>
<div class="a" style="left:7.60px;top:33.49px;width:0.95px;height:1.5px;background:#8a8a8a;opacity:0.55"></div>
</div>
<div class="hl" style="left:1060px;top:334px;width:11px;background:#9a5a7e"></div></body></html>
